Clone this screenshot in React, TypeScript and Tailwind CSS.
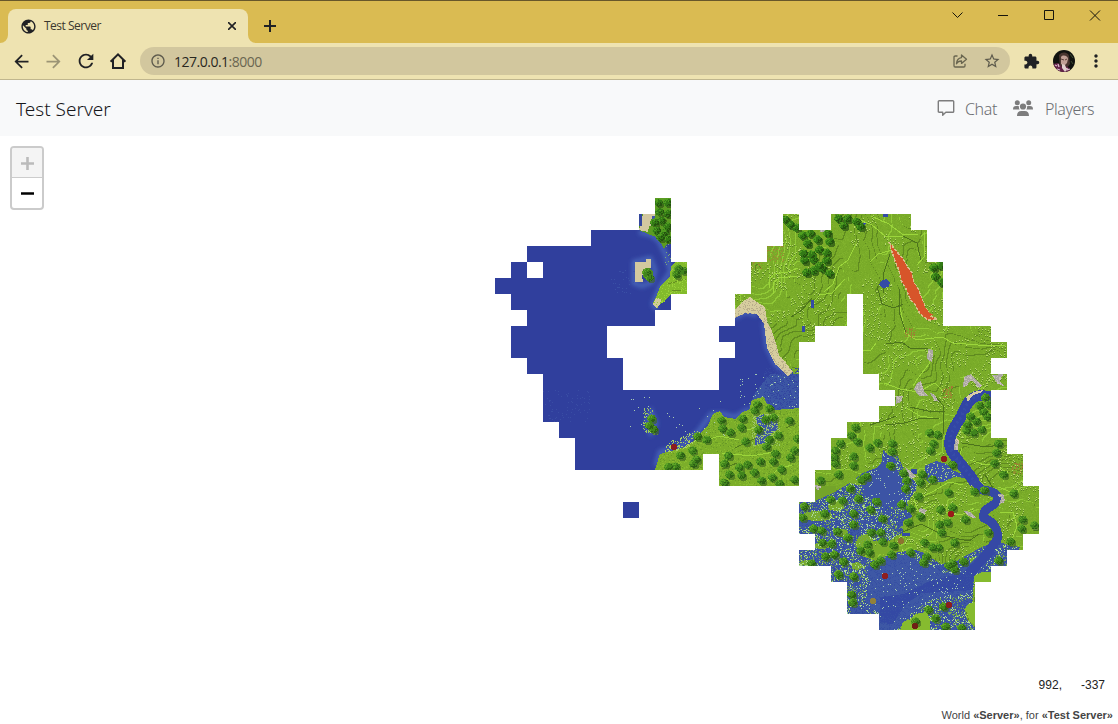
import React from "react";
import {
  MdArrowBack,
  MdArrowForward,
  MdExtension,
  MdInfoOutline,
  MdMoreVert,
  MdPublic,
  MdRefresh,
  MdStarBorder,
} from "react-icons/md";

type Point = [number, number];

// Explored 16px chunks: first row starts at y=198, each entry lists [from, to] spans.
const TOP = 198;
const ROWS: Point[][] = [
  [[655, 671]],
  [[639, 671], [783, 799], [831, 911]],
  [[591, 671], [783, 927]],
  [[527, 671], [767, 927]],
  [[511, 527], [543, 687], [751, 943]],
  [[495, 687], [751, 943]],
  [[511, 671], [735, 847], [863, 943]],
  [[527, 655], [735, 847], [863, 943]],
  [[511, 607], [719, 815], [863, 991]],
  [[511, 607], [735, 799], [863, 1007]],
  [[527, 623], [719, 799], [863, 991]],
  [[543, 623], [719, 799], [879, 1007]],
  [[543, 799], [895, 991]],
  [[543, 799], [879, 991]],
  [[559, 799], [847, 991]],
  [[575, 799], [831, 1007]],
  [[575, 703], [719, 799], [831, 1023]],
  [[719, 799], [815, 1023]],
  [[815, 1039]],
  [[623, 639], [799, 1039]],
  [[799, 1039]],
  [[815, 1023]],
  [[799, 1007]],
  [[831, 991]],
  [[847, 975]],
  [[847, 975]],
  [[879, 975]],
];

const CHUNKS = ROWS.flatMap((row, i) =>
  row.map(([a, b]) => `M${a} ${TOP + i * 16}H${b}v16H${a}z`),
).join("");

function hash(x: number, y: number, seed: number) {
  let n = Math.imul(x, 374761393) + Math.imul(y, 668265263) + Math.imul(seed, 982451653);
  n = Math.imul(n ^ (n >>> 13), 1274126177);
  return ((n ^ (n >>> 16)) >>> 0) / 4294967296;
}

function noise(x: number, y: number, scale: number, seed: number) {
  const fx = x / scale;
  const fy = y / scale;
  const ix = Math.floor(fx);
  const iy = Math.floor(fy);
  const u = (fx - ix) * (fx - ix) * (3 - 2 * (fx - ix));
  const v = (fy - iy) * (fy - iy) * (3 - 2 * (fy - iy));
  const top = hash(ix, iy, seed) * (1 - u) + hash(ix + 1, iy, seed) * u;
  const bottom = hash(ix, iy + 1, seed) * (1 - u) + hash(ix + 1, iy + 1, seed) * u;
  return top * (1 - v) + bottom * v;
}

const level = (x: number, y: number) =>
  Math.floor(noise(x, y, 40, 3) * 8 + noise(x, y, 14, 7) * 1.8 + noise(x, y, 5, 9) * 0.3);

const px = (x: number, y: number) => `M${x} ${y}h1v1h-1z`;

// Grass relief: a step up from the north-west is lit, a step down is shaded.
function relief() {
  const out = { light: "", dark: "", tuft: "", tuftDark: "", grainA: "", grainB: "" };
  ROWS.forEach((row, i) => {
    for (const [from, to] of row) {
      for (let x = Math.max(from, 639); x < to; x++) {
        for (let y = TOP + i * 16; y < TOP + i * 16 + 16; y++) {
          const d = level(x, y) - level(x - 1, y - 1);
          if (d > 0) out.light += px(x, y);
          else if (d < 0) out.dark += px(x, y);
          const r = hash(x, y, 21);
          const patch = noise(x, y, 15, 31);
          if (patch > 0.55 && r < 0.08) {
            out.tuft += px(x, y);
            out.tuftDark += px(x, y + 1);
          } else if (r > 0.84) out.grainA += px(x, y);
          else if (r > 0.68) out.grainB += px(x, y);
        }
      }
    }
  });
  return out;
}

function inside(x: number, y: number, poly: Point[]) {
  let hit = false;
  for (let i = 0, j = poly.length - 1; i < poly.length; j = i++) {
    const [xi, yi] = poly[i];
    const [xj, yj] = poly[j];
    if (yi > y !== yj > y && x < ((xj - xi) * (y - yi)) / (yj - yi) + xi) hit = !hit;
  }
  return hit;
}

function scatter(poly: Point[], density: number, seed: number, clump = 0) {
  const xs = poly.map((p) => p[0]);
  const ys = poly.map((p) => p[1]);
  let d = "";
  for (let x = Math.min(...xs); x < Math.max(...xs); x++)
    for (let y = Math.min(...ys); y < Math.max(...ys); y++)
      if (hash(x, y, seed) < density && noise(x, y, 9, seed) >= clump && inside(x, y, poly)) d += px(x, y);
  return d;
}

// Round crowns lit from the north-west, with per-pixel leaf variation.
function canopy(trees: Point[]) {
  const out = { shadow: "", mid: "", light: "", deep: "" };
  trees.forEach(([cx, cy]) => {
    for (let dx = -5; dx <= 5; dx++)
      for (let dy = -5; dy <= 5; dy++) {
        const x = cx + dx;
        const y = cy + dy;
        const leaf = hash(x, y, 91);
        if (dx * dx + dy * dy * 1.15 < 17 + leaf * 4) {
          const lit = -dx - dy + (leaf - 0.5) * 7;
          if (lit > 3) out.light += px(x, y);
          else if (lit > -2.5) out.mid += px(x, y);
          else out.deep += px(x, y);
        } else if ((dx - 2) ** 2 + (dy - 2) ** 2 < 16) out.shadow += px(x, y);
      }
  });
  return out;
}

const pts = (p: Point[]) => p.map((q) => q.join(",")).join(" ");
const box = (x1: number, y1: number, x2: number, y2: number): Point[] => [[x1, y1], [x2, y1], [x2, y2], [x1, y2]];

const NORTH_SHORE: Point[] = [[639, 198], [671, 198], [671, 243], [667, 244], [664, 249], [660, 241], [656, 237], [648, 234], [639, 230]];
const EAST_ISLET: Point[] = [[687, 262], [675, 262], [671, 267], [670, 276], [660, 287], [656, 297], [653, 303], [656, 308], [662, 303], [671, 295], [671, 294], [687, 294]];
const SOUTH_COAST: Point[] = [[655, 470], [658, 460], [660, 454], [667, 452], [680, 449], [690, 444], [700, 434], [708, 425], [713, 414], [720, 411], [724, 417], [736, 419], [741, 413], [750, 409], [751, 401], [758, 398], [764, 397], [767, 404], [774, 410], [788, 409], [799, 408], [799, 487], [655, 487]];
const BAY: Point[] = [[719, 315], [737, 315], [745, 312], [757, 313], [765, 323], [765, 330], [768, 347], [775, 362], [787, 374], [799, 374], [799, 409], [719, 430]];
const BEACH: Point[] = [[735, 309], [742, 302], [750, 297], [757, 302], [765, 307], [767, 322], [772, 331], [776, 343], [779, 355], [786, 363], [793, 372], [788, 376], [775, 364], [767, 348], [764, 324], [757, 314], [745, 313], [735, 318]];
const SWAMP: Point[] = [[883, 450], [889, 455], [897, 455], [902, 465], [905, 472], [918, 484], [916, 490], [907, 502], [912, 517], [903, 521], [903, 532], [890, 540], [862, 541], [857, 554], [875, 561], [893, 553], [915, 550], [925, 553], [940, 564], [955, 562], [967, 555], [982, 547], [997, 541], [1008, 545], [1020, 547], [1007, 566], [991, 574], [974, 579], [972, 603], [965, 608], [967, 620], [975, 627], [975, 630], [799, 630], [799, 502], [815, 501], [833, 493], [850, 483], [863, 473], [881, 466]];
const LAGOON: Point[] = [[925, 466], [936, 461], [947, 464], [952, 470], [965, 475], [967, 478], [954, 477], [943, 482], [929, 483], [925, 477]];
const SOUTH_LAKE: Point[] = [[866, 567], [895, 553], [920, 560], [944, 573], [965, 568], [988, 545], [996, 552], [974, 577], [972, 593], [950, 595], [930, 600], [910, 614], [897, 630], [879, 630], [879, 613], [865, 601], [870, 585]];
const DEEP_CHANNEL: Point[] = [[880, 597], [904, 594], [930, 581], [962, 573], [986, 550], [996, 552], [974, 575], [972, 590], [948, 592], [922, 593], [905, 605], [893, 624], [880, 623]];
const RAVINE: Point[] = [[889, 242], [893, 247], [898, 253], [903, 259], [907, 266], [912, 273], [913, 281], [918, 289], [922, 299], [926, 309], [931, 316], [937, 319], [928, 320], [920, 314], [916, 306], [910, 299], [906, 289], [901, 280], [899, 270], [895, 261], [892, 252]];
const RIVER = "M994 398C982 394 973 394 966 406L961 417C956 424 948 437 950 447C954 459 966 468 975 483";
const RIVER_TAIL = "M973 480L982 490C992 491 999 494 998 500C996 506 981 508 984 518C994 522 999 530 997 540L984 557L971 573";

const FOREST: Point[] = [
  // northern shore
  [658, 202], [667, 202], [659, 211], [667, 213], [654, 222], [661, 220], [667, 226], [656, 230], [664, 232], [660, 237], [667, 238],
  // northern hills
  [785, 219], [790, 224], [796, 227], [802, 235], [810, 233], [817, 239], [827, 233], [829, 241], [807, 243], [803, 253], [811, 254], [819, 249], [826, 252], [804, 260], [813, 259], [826, 260], [819, 265], [806, 272], [813, 270], [822, 268], [829, 273], [838, 218], [847, 218], [843, 225], [856, 221], [860, 226], [933, 267], [940, 265], [935, 276], [941, 282],
];

const TREES: Point[] = [
  [646, 272], [649, 277], [678, 268], [683, 270], [676, 274],
  // southern coast
  [651, 418], [649, 425], [653, 429], [697, 436], [706, 439], [721, 420], [722, 428], [730, 432], [742, 418], [741, 427], [757, 404], [754, 410], [769, 408], [765, 419], [773, 417], [789, 420], [758, 429], [745, 441], [769, 439], [778, 435], [766, 446], [797, 438], [794, 450], [775, 453], [790, 457], [760, 461], [773, 461], [728, 455], [724, 463], [739, 467], [747, 464], [754, 472], [741, 475], [729, 474], [724, 482], [761, 480], [772, 477], [781, 469], [794, 479], [779, 483], [680, 455], [692, 450], [696, 459], [693, 463], [668, 466], [675, 466],
  // river bank
  [979, 405], [983, 411], [987, 416], [970, 416], [976, 421], [967, 424], [966, 430], [973, 432], [981, 429], [988, 404], [985, 397], [998, 443], [996, 452], [994, 463], [929, 432], [937, 434], [933, 443], [930, 450],
  // marsh
  [855, 427], [851, 435], [857, 441], [840, 443], [835, 450], [869, 447], [877, 442], [892, 443], [892, 451], [853, 456], [853, 465], [834, 457], [835, 463], [838, 474], [820, 480], [890, 465], [903, 473], [906, 480], [922, 474], [920, 482], [932, 479], [952, 464], [861, 479], [866, 476], [850, 488], [830, 499], [842, 500], [858, 498], [870, 509], [876, 501], [853, 513], [804, 506], [824, 513], [901, 504], [910, 508], [918, 496], [905, 488], [948, 492], [974, 491], [984, 490], [1003, 474], [1013, 493], [952, 507], [940, 509],
  [802, 517], [813, 528], [837, 531], [847, 537], [853, 524], [821, 530], [871, 532], [880, 532], [882, 518], [908, 522], [920, 516], [939, 524], [947, 522], [965, 519], [941, 532], [988, 532], [1022, 519], [1034, 525], [1021, 528], [831, 543], [822, 542], [867, 544], [860, 550], [869, 552], [882, 541], [893, 545], [910, 552], [924, 542], [932, 547], [938, 547], [954, 542], [926, 556], [923, 562], [834, 554], [843, 561], [825, 556], [874, 564], [880, 560], [891, 554], [811, 563], [838, 574], [853, 576], [948, 565], [954, 569], [952, 563], [963, 561], [998, 560], [1010, 541], [851, 594], [852, 602], [928, 609], [943, 606], [915, 621], [935, 618], [945, 626], [961, 627],
];

const MEADOWS: [number, number, number, number][] = [
  [817, 516, 15, 5], [836, 506, 8, 5], [865, 544, 9, 10], [857, 566, 5, 4], [881, 550, 12, 4], [842, 533, 6, 4], [822, 546, 8, 3], [975, 561, 5, 4], [860, 482, 9, 3], [808, 563, 8, 3],
];

const LIGHT_LINES = [
  "M769 288v-8l5-6 14-2 10-4", "M773 294v-11l6-5 18-2", "M824 292l9-8 6-17 9-7 8-16", "M810 305l10-10 12-2 13-14", "M870 262l8-8 18-5",
  "M860 220l12 5 13 11h20", "M871 216l18 8 13 10h16", "M924 232v25l-7 8", "M900 307l5 26 12 7 25-3 11 6 25 2 27 1", "M932 347l-3 17-11 14-5 8",
  "M863 350h8l5-7M884 383l16 6 18 3 17-9 8 8", "M905 407l15 9 20 3", "M960 473l12 2 12 10M962 448l-4 13 6 7",
  "M970 460l12 4h12l14 9-5 9", "M963 485l-14-3-17 10-18 8 4 11 18-7", "M998 487l13 5 6-6M1000 512h13l4 14-5 14", "M942 512l19 3 13-7", "M722 453l30 3 22-4", "M792 465l-14 4-13 14",
];
const DARK_LINES = [
  "M890 254l-6 18-1 22", "M903 236l14 7 4 17", "M899 289l1 26 6 18", "M877 286l5 18 12 4 9-4", "M791 317l11-7 10-12", "M886 344l16-2 9 7 17-1", "M936 397l7 8v29",
  "M886 425l18-2 18-5 17 1", "M910 407l18 4h17", "M962 443l24 4 15-2", "M870 425l16-5 10-4", "M903 532l18-8 24 12 24 5 10-7", "M735 448l21-10", "M985 475l8 13 8 6",
];

const ROCKS: Point[][] = [
  [[928, 349], [933, 350], [932, 362], [927, 359]],
  [[917, 383], [921, 381], [924, 392], [929, 396], [919, 396], [914, 389]],
  [[930, 393], [934, 394], [939, 402], [934, 400]],
  [[896, 396], [903, 396], [901, 402], [896, 404]],
  [[964, 377], [971, 374], [976, 380], [982, 385], [979, 388], [971, 380], [966, 386], [963, 387]],
  [[992, 375], [1003, 374], [1000, 381], [1004, 386], [997, 383]],
  [[955, 439], [958, 441], [958, 449], [954, 450]],
  [[997, 494], [1003, 494], [1005, 501], [999, 505], [1001, 498]],
  [[905, 467], [912, 472], [916, 477], [910, 478]],
  [[920, 508], [927, 510], [924, 514], [919, 511]],
  [[964, 511], [971, 512], [976, 518], [968, 516]],
  [[814, 485], [821, 486], [818, 491]],
  [[820, 230], [826, 230], [824, 232], [820, 232]],
];

const MUSHROOMS: [number, number, string][] = [
  [674, 447, "#8c1d1d"], [944, 459, "#8c1d1d"], [951, 514, "#9a1a1a"], [885, 576, "#8f1d1f"], [949, 605, "#8c1d1d"], [915, 626, "#6f1f14"], [901, 541, "#8d7230"], [873, 601, "#91813a"],
];

const WorldMap = React.memo(function WorldMap() {
  const r = relief();
  const oaks = canopy(FOREST);
  const swampOaks = canopy(TREES);
  return (
    <svg className="block h-full w-full" viewBox="0 136 1118 588" shapeRendering="crispEdges">
      <defs>
        <clipPath id="explored">
          <path d={CHUNKS} />
        </clipPath>
        <filter id="shoal" x="-20%" y="-20%" width="140%" height="140%">
          <feGaussianBlur stdDeviation="2.2" />
        </filter>
      </defs>
      <g clipPath="url(#explored)">
        <rect x="490" y="190" width="560" height="450" fill="#7aac29" />
        <path d={r.grainA} fill="#80b22d" />
        <path d={r.grainB} fill="#75a727" />
        <path d={r.dark} fill="#5f8a20" />
        <path d={r.light} fill="#90c936" />
        <path d={r.tuftDark} fill="#5a8624" />
        <path d={r.tuft} fill="#b3d768" />
        {LIGHT_LINES.map((d) => (
          <path key={d} d={d} fill="none" stroke="#9cd63b" strokeWidth="1" />
        ))}
        {DARK_LINES.map((d) => (
          <path key={d} d={d} fill="none" stroke="#4c731c" strokeWidth="1" />
        ))}
        <path d={scatter(box(767, 246, 784, 262), 0.22, 41)} fill="#9b8a32" />
        <path d={scatter(box(752, 258, 762, 269), 0.22, 42)} fill="#9b8a32" />
        <path d={scatter(box(905, 328, 916, 338), 0.2, 43)} fill="#a37a35" />
        <path d={scatter(box(943, 386, 953, 398), 0.25, 44)} fill="#a37a35" />
        <path d={scatter(box(1012, 463, 1023, 474), 0.25, 45)} fill="#a37a35" />

        {/* ocean */}
        <path d="M490 190H719V500H490z" fill="#303f9d" />
        <rect x="623" y="502" width="16" height="16" fill="#303f9d" />
        <path d="M719 390H760V430H719z" fill="#303f9d" />
        <polygon points={pts(BAY)} fill="#303f9d" />
        <g filter="url(#shoal)" fill="none" stroke="#4a68bb" strokeWidth="4" shapeRendering="auto">
          <path d="M639 232l12 3 8 6 6 12 6 18-11 16-7 17 4 6M634 262l16-4 5 12-3 12-10 4-8-3zM656 466l4-14 20-5 18-15 13-18 12 0 12 3 14-8M764 322l3 25 9 18 20 16M735 318l10-6 12 3M651 412l5 12-5 9-4-9z" />
        </g>
        <path d={scatter(box(610, 270, 635, 294), 0.05, 51)} fill="#3a50a6" />
        <path d={scatter(box(543, 390, 590, 422), 0.04, 52)} fill="#394da4" />
        <polygon points={pts(NORTH_SHORE)} fill="#5c9c22" />
        <path d="M643 214h12v10l-6 2-1 6-9-2z" fill="#d2c7a0" />
        <path d="M639 214h3v12h-3z" fill="#33479d" />
        <path d="M652 216h3v4h-3z" fill="#4058a3" />
        <path d="M635 262h11v-3h5v6l-1 6-8 4 1 7h-8z" fill="#d3c99f" />
        <ellipse cx="648" cy="274" rx="5" ry="6" fill="#4b8e1c" />
        <polygon points={pts(EAST_ISLET)} fill="#83bb2b" />
        <path d="M656 298l5 1-1 6-4 3-3-4z" fill="#d0cb98" />
        <path d="M667 284l19-5M672 290h10" stroke="#668f22" strokeWidth="1" />
        <path d={scatter(EAST_ISLET, 0.15, 54)} fill="#9ad139" />
        <path d={scatter(box(664, 244, 680, 270), 0.06, 53)} fill="#7cab74" />

        {/* bay and southern coast */}
        <path d="M770 374h29v37h-52l8-18z" fill="#3c56a4" />
        <path d={scatter(box(764, 368, 799, 410), 0.25, 61)} fill="#3447a0" />
        <path d={scatter(box(740, 372, 799, 410), 0.03, 62)} fill="#9fc6b0" />
        <polygon points={pts(BEACH)} fill="#d6cd9f" />
        <path d={scatter(BEACH, 0.2, 63)} fill="#b9ad8b" />
        <polygon points={pts(SOUTH_COAST)} fill="#7cae2a" />
        <path d={scatter(SOUTH_COAST, 0.16, 64)} fill="#88bc2f" />
        <path d={scatter(SOUTH_COAST, 0.08, 65)} fill="#689a26" />
        <path d="M722 453l30 3 22-4M705 441l14-5 20 4M792 465l-14 4-13 14M738 424l10 6 6-2" fill="none" stroke="#9bd53a" strokeWidth="1" />
        <path d="M735 448l21-10M722 469l15-6M786 428l10-5" fill="none" stroke="#537d1e" strokeWidth="1" />
        <path d="M755 418l8-4 6 4 9 3 0 8-8 6-5 8-10 2v-8l5-8z" fill="#3e5aa2" />
        <path d={scatter(box(752, 414, 780, 446), 0.28, 66)} fill="#9cc66a" />
        <path d={scatter([[662, 450], [672, 440], [696, 430], [702, 433], [690, 446], [668, 453]], 0.3, 67)} fill="#a9d164" />
        <path d={scatter(box(624, 394, 725, 436), 0.006, 68)} fill="#a9cbb0" />
        <path d={scatter(box(643, 408, 658, 435), 0.22, 69, 0.3)} fill="#9cc85f" />

        {/* marsh, lakes and river */}
        <path d="M799 486H836V530H799z" fill="#74a42a" />
        <polygon points={pts(SWAMP)} fill="#3d57a4" />
        <path d={scatter(SWAMP, 0.3, 71)} fill="#354ba0" />
        <polygon points={pts(LAGOON)} fill="#3c55a8" />
        {MEADOWS.map(([cx, cy, rx, ry]) => (
          <ellipse key={`${cx}-${cy}`} cx={cx} cy={cy} rx={rx} ry={ry} fill="#79ac2b" />
        ))}
        <path d={scatter(SWAMP, 0.2, 72, 0.3)} fill="#76a74e" />
        <path d={scatter(SWAMP, 0.14, 73, 0.25)} fill="#addb93" />
        <path d={scatter(LAGOON, 0.13, 74)} fill="#a5cf7d" />
        <path d="M866 478l17-16 10-1 12 24 0 12-10 10-18-3-14-11z" fill="#3c54a5" />
        <polygon points={pts(SOUTH_LAKE)} fill="#3e58a5" />
        <polygon points={pts(DEEP_CHANNEL)} fill="#3449a4" />
        <path d={scatter(SOUTH_LAKE, 0.2, 75)} fill="#3750a3" />
        <path d={scatter(SOUTH_LAKE, 0.03, 76)} fill="#a5cbb1" />
        <path d={scatter(box(866, 462, 903, 504), 0.03, 77)} fill="#a5cbb1" />
        <path d="M900 630l3-8 8-3 4-5 12-2 3 7v11zM975 602l-7 2-4 6 4 4 1 7 6 4zM974 576l8-4h9v10h-17z" fill="#86bb2f" />
        <g fill="none">
          <path d={RIVER} stroke="#3245a5" strokeWidth="11" />
          <path d={RIVER_TAIL} stroke="#3548a5" strokeWidth="9" />
          <path d={RIVER} stroke="#4058b0" strokeWidth="3" strokeDasharray="2 3" opacity=".35" />
        </g>
        <path d="M966 397l8-5 9-2-1 2-9 3-5 7zM956 438l3 2-1 8-3 2z" fill="#d9cda3" />

        {/* ponds */}
        <path d="M881 281l5-2 4 3-1 5-6 1-4-3zM811 300h3v8h-3zM802 326h3v6h-3zM858 222l8 1-2 3h-6zM883 214h5v3h-5zM902 533h8v3h-8zM911 469h6v5h-6z" fill="#344ba6" />

        {/* lava ravine */}
        <polygon points={pts(RAVINE)} fill="#d7572c" stroke="#d8be8a" strokeWidth="1.6" strokeDasharray="3 1.5" />
        <polygon points={pts(RAVINE)} fill="#d7552a" transform="translate(91 28) scale(.9)" />

        {ROCKS.map((p, i) => (
          <g key={i}>
            <polygon points={pts(p)} fill="#aaa8a1" />
            <path d={scatter(p, 0.35, 80 + i)} fill="#c9bfbb" />
          </g>
        ))}
        <path d={oaks.shadow} fill="#3f6b1a" />
        <path d={oaks.light} fill="#4e9c1f" />
        <path d={oaks.mid} fill="#337a16" />
        <path d={oaks.deep} fill="#24520f" />
        <path d={swampOaks.shadow} fill="#3f6722" opacity=".65" />
        <path d={swampOaks.light} fill="#5da426" />
        <path d={swampOaks.mid} fill="#41841d" />
        <path d={swampOaks.deep} fill="#2c5f15" />
        {MUSHROOMS.map(([x, y, fill]) => (
          <path key={`${x}-${y}`} d={`M${x - 2} ${y - 3}h4v1h1v4h-1v1h-4v-1h-1v-4h1z`} fill={fill} />
        ))}
      </g>
    </svg>
  );
});

function WindowControls() {
  return (
    <svg className="h-[42px] w-[178px]" viewBox="940 1 178 42" fill="none" stroke="#17150d" strokeWidth="1">
      <path d="M952.5 12.5l5 5 5-5" />
      <path d="M998 15.5h10" />
      <path d="M1044.5 10.5h9v9h-9z" />
      <path d="M1090 10.5l10 10M1100 10.5l-10 10" />
    </svg>
  );
}

function ShareIcon() {
  return (
    <svg className="h-4 w-4" viewBox="0 0 16 16" fill="none" stroke="#69654f" strokeWidth="1.3" strokeLinejoin="round">
      <path d="M5.500 3H3.200Q2 3 2 4.200v8.600Q2 14 3.200 14h8.600q1.200 0 1.200-1.200v-2" />
      <path d="M9.500 2l5 4.200-5 4.200V8C7 8 5.500 8.900 4.500 10.800 4.700 7.400 6.500 5 9.500 4.600z" />
    </svg>
  );
}

function HomeIcon() {
  return (
    <svg className="h-5 w-5" viewBox="0 0 20 20" fill="none" stroke="#202124" strokeWidth="2">
      <path d="M2.600 10.800L10 3.400l7.400 7.400M5 9v8h10V9" />
    </svg>
  );
}

function ChatIcon() {
  return (
    <svg className="h-[18px] w-[18px]" viewBox="0 0 18 18" fill="none" stroke="#7d7d7d" strokeWidth="1.400" strokeLinejoin="round">
      <path d="M2.200 1.700h13.600q.9 0 .9.900v9.800q0 .9-.9.900H8.800L5.700 16.200v-2.900H2.200q-.9 0-.9-.9V2.600q0-.9.9-.9z" />
    </svg>
  );
}

function PlayersIcon() {
  return (
    <svg className="block h-[18px] w-5" viewBox="0 0 20 18" fill="#7d7d7d">
      <circle cx="4.300" cy="3.800" r="2.500" />
      <circle cx="15.700" cy="3.800" r="2.500" />
      <circle cx="10" cy="7.500" r="3.100" />
      <path d="M0 10.400q0-3.300 3-3.300h2q.6 0 1.100.3-.5 1.800.5 3zM20 10.400q0-3.300-3-3.300h-2q-.6 0-1.100.3.5 1.800-.5 3zM4 17q0-5 4.400-5h3.200q4.400 0 4.400 5z" />
    </svg>
  );
}

function Avatar() {
  return (
    <svg className="h-[22px] w-[22px] rounded-full" viewBox="0 0 22 22">
      <rect width="22" height="22" fill="#11120f" />
      <path d="M6 5c3-4 9-3 10 1l1 8-4 5H7z" fill="#49352f" />
      <path d="M8 7c2-3 7-1 7 2l-1 4-3 3-3-2z" fill="#c2a096" />
      <path d="M8 9l3 1M12 10l2-1" stroke="#5b4039" strokeWidth="1" />
      <path d="M0 14l5-1 4 4 2-1 4 1 3 5H1z" fill="#642348" />
      <path d="M2 15l2 1M5 14l1 3M4 19l3 1M12 18l3 1M14 20l3-1" stroke="#d9b8cb" strokeWidth="1.300" />
      <path d="M9 14l3 1 2 5-2 2-3-4z" fill="#e2d0cd" />
      <path d="M17 4l3 4M18 11l2 3" stroke="#3d4a32" strokeWidth="1" />
    </svg>
  );
}

export default function App() {
  return (
    <div className="flex h-[724px] w-[1118px] flex-col overflow-hidden bg-white font-['Open_Sans',sans-serif]">
      <div className="flex h-[43px] shrink-0 border-t border-[#67572a] bg-[#dabb52]">
        <div className="flex w-[256px] shrink-0 items-end">
          <svg className="h-2 w-2" viewBox="0 0 8 8">
            <path d="M8 0v8H0a8 8 0 0 0 8-8z" fill="#eee3b1" />
          </svg>
          <div className="flex h-[34px] w-[240px] items-center rounded-t-lg bg-[#eee3b1] pl-3 pr-3">
            <MdPublic className="h-[17px] w-[17px] text-[#202124]" />
            <span className="ml-[7px] flex-1 whitespace-nowrap text-[12px] tracking-[-0.5px] text-[#3b382e]">Test Server</span>
            <svg className="h-2 w-2" viewBox="0 0 8 8" stroke="#202124" strokeWidth="1.600">
              <path d="M0 0l8 8M8 0L0 8" />
            </svg>
          </div>
          <svg className="h-2 w-2" viewBox="0 0 8 8">
            <path d="M0 0v8h8a8 8 0 0 1-8-8z" fill="#eee3b1" />
          </svg>
        </div>
        <svg className="ml-2 mt-[19px] h-3 w-3" viewBox="0 0 12 12" stroke="#202124" strokeWidth="2">
          <path d="M6 0v12M0 6h12" />
        </svg>
        <div className="ml-auto">
          <WindowControls />
        </div>
      </div>

      <div className="flex h-[37px] shrink-0 items-center border-b border-[#c0b68e] bg-[#eee3b1] pl-[11px] text-[#202124]">
        <MdArrowBack className="h-[21px] w-[21px]" />
        <MdArrowForward className="ml-[11px] h-[21px] w-[21px] text-[#9b9475]" />
        <MdRefresh className="ml-[11px] h-[22px] w-[22px]" />
        <div className="ml-[11px]">
          <HomeIcon />
        </div>
        <div className="ml-3 flex h-7 w-[870px] items-center rounded-full bg-[#d2c79e] pl-[10px] pr-[9px]">
          <MdInfoOutline className="h-4 w-4 text-[#5d5a4c]" />
          <span className="ml-2 text-[14px] tracking-[-0.5px] text-[#29271f]">
            127.0.0.1<span className="text-[#6a6651]">:8000</span>
          </span>
          <div className="ml-auto flex items-center gap-[15px]">
            <ShareIcon />
            <MdStarBorder className="h-[18px] w-[18px] text-[#5d5a4c]" />
          </div>
        </div>
        <MdExtension className="ml-[13px] h-[17px] w-[17px]" />
        <div className="ml-[13px]">
          <Avatar />
        </div>
        <MdMoreVert className="ml-[11px] h-5 w-5" />
      </div>

      <header className="flex h-14 shrink-0 items-center bg-[#f8f9fa] pl-4 pr-6">
        <h1 className="pt-[2px] font-['Noto_Sans','Open_Sans',sans-serif] text-[19px] font-light text-[#16171a]">
          Test Server
        </h1>
        <nav className="ml-auto flex items-center font-['Noto_Sans','Open_Sans',sans-serif] text-[16px] font-light text-[#6c6e72]">
          <ChatIcon />
          <span className="ml-[10px] pt-px tracking-[-0.4px]">Chat</span>
          <span className="ml-4">
            <PlayersIcon />
          </span>
          <span className="ml-3 pt-px tracking-[-0.4px]">Players</span>
        </nav>
      </header>

      <main className="relative flex-1 bg-white">
        <WorldMap />
        <div className="absolute left-[10px] top-[10px] flex h-16 w-[34px] flex-col overflow-hidden rounded-[4px] border-2 border-[#cbcbcb] bg-white">
          <button aria-label="Zoom in" className="flex h-[30px] w-full items-center justify-center border-b border-[#ccc] bg-[#f4f4f4] pt-px">
            <svg className="h-[13px] w-[13px]" viewBox="0 0 13 13" stroke="#bbb" strokeWidth="2.600">
              <path d="M6.500 0v13M0 6.500h13" />
            </svg>
          </button>
          <button aria-label="Zoom out" className="flex h-[30px] w-full items-center justify-center">
            <svg className="h-[13px] w-[13px]" viewBox="0 0 13 13" stroke="#000" strokeWidth="2.600">
              <path d="M0 6.500h13" />
            </svg>
          </button>
        </div>
        <div className="absolute bottom-[31px] right-[13px] flex font-['Liberation_Sans',sans-serif] text-[12px] leading-4 text-[#222]">
          <span>992,</span>
          <span className="ml-[19px]">-337</span>
        </div>
        <div className="absolute bottom-0 right-[5px] whitespace-nowrap font-['Liberation_Sans',sans-serif] text-[11px] leading-[18px] text-[#444]">
          World <b>«Server»</b>, for <b>«Test Server»</b>
        </div>
      </main>
    </div>
  );
}
